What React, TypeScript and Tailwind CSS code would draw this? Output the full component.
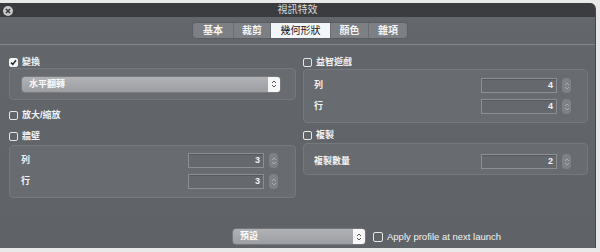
import React from 'react';

const cjk = "font-['Liberation_Sans','Noto_Sans_CJK_TC',sans-serif]";

function Check({ checked = false }: { checked?: boolean }) {
  return (
    <span
      className={`w-[9px] h-[9px] rounded-[2px] flex items-center justify-center shrink-0 ${
        checked ? 'bg-[#f4f4f4] border border-[#f4f4f4]' : 'border border-[#e6e6e6] bg-transparent'
      }`}
    >
      {checked && (
        <svg width="7" height="7" viewBox="0 0 7 7">
          <path d="M1 3.6 L2.8 5.4 L6 1.2" fill="none" stroke="#2b2c2f" strokeWidth="1.6" />
        </svg>
      )}
    </span>
  );
}

function CheckRow({ label, checked }: { label: string; checked?: boolean }) {
  return (
    <div className="flex items-center gap-[4px] h-[10px]">
      <Check checked={checked} />
      <span className="text-[9px] font-bold text-[#f2f2f2] leading-none">{label}</span>
    </div>
  );
}

function Chevrons({ color }: { color: string }) {
  return (
    <svg width="6" height="10" viewBox="0 0 6 10">
      <path d="M1 4 L3 2 L5 4 M1 6 L3 8 L5 6" fill="none" stroke={color} strokeWidth="1" />
    </svg>
  );
}

function NumberRow({ label, value }: { label: string; value: string }) {
  return (
    <div className="flex items-center h-[15px]">
      <span className="text-[9px] font-bold text-[#f2f2f2] leading-none flex-1">{label}</span>
      <div className="w-[76px] h-[15px] border border-[#8c8f93] bg-[#65686d] shadow-[inset_0_1px_0_#55585c] flex items-center justify-end pr-[3px]">
        <span className="text-[9px] font-bold text-[#f2f2f2] leading-none">{value}</span>
      </div>
      <div className="ml-[5px] w-[9px] h-[15px] rounded-[4px] bg-[#7e8185] flex items-center justify-center">
        <Chevrons color="#a9acaf" />
      </div>
    </div>
  );
}

function Select({ label, width }: { label: string; width: string }) {
  return (
    <div className={`${width} h-[15px] rounded-[3px] bg-gradient-to-b from-[#b0b2b6] to-[#9c9ea2] flex items-center overflow-hidden shadow-[0_0_0_0.5px_#8a8c90]`}>
      <span className="flex-1 pl-[7px] text-[9px] font-bold text-[#fafafa] leading-none">{label}</span>
      <div className="w-[12px] h-full bg-[#f7f7f7] flex items-center justify-center">
        <Chevrons color="#555" />
      </div>
    </div>
  );
}

function Group({ children, className }: { children: React.ReactNode; className: string }) {
  return (
    <div className={`rounded-[4px] border border-[#75787d] bg-[#686b70] ${className}`}>{children}</div>
  );
}

export default function App() {
  const tabs = [
    { t: '基本', w: 'w-[40px]' },
    { t: '裁剪', w: 'w-[37px]' },
    { t: '幾何形狀', w: 'w-[60px]', active: true },
    { t: '顏色', w: 'w-[38px]' },
    { t: '雜項', w: 'w-[39px]' },
  ];

  return (
    <div className={`w-[600px] h-[252px] bg-[#e9e9e9] pt-[3px] ${cjk}`}>
      <div className="w-[596px] h-[245px] rounded-tr-[6px] overflow-hidden flex flex-col bg-gradient-to-b from-[#63666b] to-[#5f6267] border-r border-[#45464a]">
        {/* title bar */}
        <div className="h-[14px] bg-[#3b3c40] relative flex items-center justify-center shrink-0">
          <div className="absolute left-[3px] top-[3px] w-[10px] h-[10px] rounded-full bg-[#c8c8c8] flex items-center justify-center">
            <svg width="6" height="6" viewBox="0 0 6 6">
              <path d="M1 1 L5 5 M5 1 L1 5" stroke="#3b3c40" strokeWidth="1.5" />
            </svg>
          </div>
          <span className="text-[10px] text-[#dcdcdc] leading-none">視訊特效</span>
        </div>

        {/* tabs */}
        <div className="h-[27px] flex items-center justify-center pl-[5px] shrink-0">
          <div className="flex h-[17px] rounded-[4px] overflow-hidden border border-[#5a5d61] bg-[#7c7f84]">
            {tabs.map((tab, i) => (
              <div
                key={tab.t}
                className={`${tab.w} flex items-center justify-center text-[10px] leading-none ${
                  tab.active ? 'bg-[#f2f5fa] text-[#222]' : 'text-[#f4f4f4] font-bold'
                } ${i > 0 ? 'border-l border-[#6a6d71]' : ''}`}
              >
                {tab.t}
              </div>
            ))}
          </div>
        </div>
        <div className="h-px bg-[#85888c] shrink-0" />

        {/* body */}
        <div className="flex gap-[7px] pl-[9px] pt-[12px]">
          <div className="w-[287px] flex flex-col">
            <CheckRow label="變換" checked />
            <Group className="mt-[1px] h-[32px] flex items-center pl-[12px]">
              <Select label="水平翻轉" width="w-[258px]" />
            </Group>
            <div className="mt-[10px]">
              <CheckRow label="放大/縮放" />
            </div>
            <div className="mt-[11px]">
              <CheckRow label="牆壁" />
            </div>
            <Group className="mt-[4px] h-[53px] pl-[11px] pr-[17px] pt-[7px] flex flex-col gap-[6px]">
              <NumberRow label="列" value="3" />
              <NumberRow label="行" value="3" />
            </Group>
          </div>

          <div className="w-[285px] flex flex-col">
            <CheckRow label="益智遊戲" />
            <Group className="mt-[2px] h-[54px] pl-[10px] pr-[16px] pt-[8px] flex flex-col gap-[6px]">
              <NumberRow label="列" value="4" />
              <NumberRow label="行" value="4" />
            </Group>
            <div className="mt-[7px]">
              <CheckRow label="複製" />
            </div>
            <Group className="mt-[3px] h-[32px] pl-[10px] pr-[16px] pt-[10px]">
              <NumberRow label="複製數量" value="2" />
            </Group>
          </div>
        </div>

        {/* footer */}
        <div className="mt-auto mb-[4px] flex items-center pl-[233px] gap-[8px]">
          <Select label="預設" width="w-[132px]" />
          <div className="flex items-center gap-[4px]">
            <span className="w-[10px] h-[10px] rounded-[2px] border border-[#e6e6e6]" />
            <span className="font-['Liberation_Sans',sans-serif] text-[9.5px] text-[#f2f2f2] leading-none">
              Apply profile at next launch
            </span>
          </div>
        </div>
      </div>
    </div>
  );
}
